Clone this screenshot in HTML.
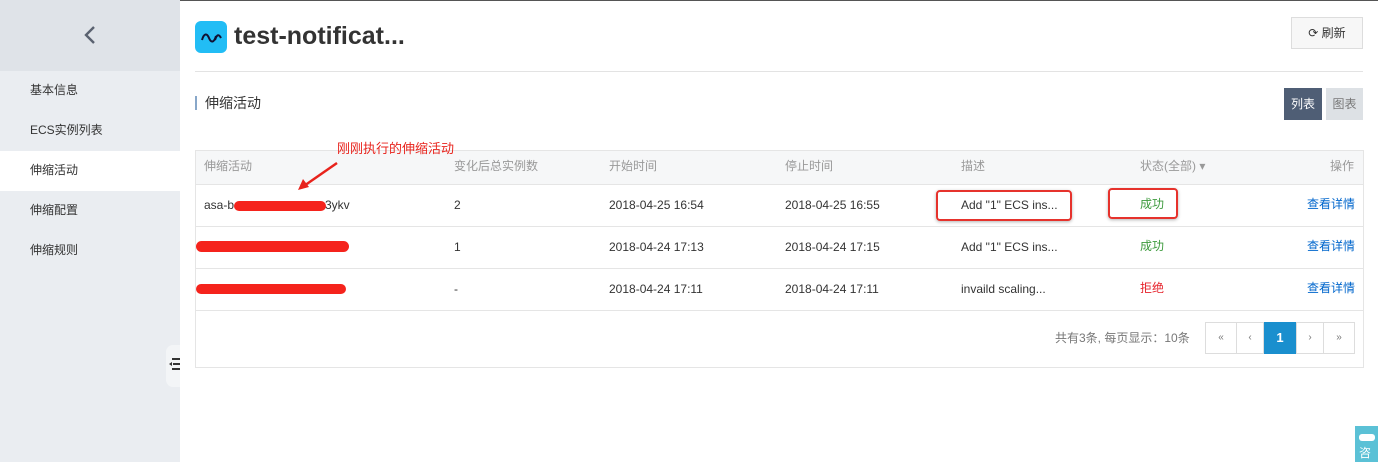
<!DOCTYPE html>
<html><head><meta charset="utf-8"><style>
*{margin:0;padding:0;box-sizing:border-box}
body{width:1378px;height:462px;overflow:hidden;background:#fff;font-family:"Liberation Sans","Noto Sans CJK SC",sans-serif;font-size:12px;color:#333;position:relative;line-height:14px}
.abs{position:absolute}
.side{left:0;top:0;width:180px;height:462px;background:#eaedf1}
.sidetop{left:0;top:0;width:180px;height:71px;background:#dfe3e8}
.nav{left:30px;font-size:12px;color:#333}
.th{top:159px;color:#999;font-size:12px}
.td{font-size:12px;color:#333}
.hl{border-top:1px solid #e5e5e5;left:196px;width:1167px}
.red{position:absolute;background:#f5231c;border-radius:6px}
.box{position:absolute;border:2px solid #e6322c;border-radius:4px;box-shadow:0 1px 3px rgba(0,0,0,.3)}
.pg{top:322px;height:32px;border:1px solid #ddd;background:#fff;color:#777;font-size:10px;text-align:center;line-height:30px}
</style></head><body>
<div class="abs" style="left:0;top:0;width:1378px;height:1px;background:#555"></div>
<div class="abs side"></div>
<div class="abs sidetop"></div>
<svg class="abs" style="left:83px;top:25px" width="14" height="20"><path d="M11 2 L3 10 L11 18" stroke="#5a6270" stroke-width="2.4" fill="none"/></svg>
<div class="abs nav" style="top:83px">基本信息</div>
<div class="abs nav" style="top:123px">ECS实例列表</div>
<div class="abs" style="left:0;top:151px;width:180px;height:40px;background:#fff"></div>
<div class="abs nav" style="top:163px">伸缩活动</div>
<div class="abs nav" style="top:203px">伸缩配置</div>
<div class="abs nav" style="top:243px">伸缩规则</div>
<div class="abs" style="left:166px;top:345px;width:14px;height:42px;background:#f3f5f7;border-radius:7px 0 0 7px"></div>
<svg class="abs" style="left:169px;top:357px" width="11" height="15"><rect x="3" y="1" width="8" height="2" fill="#333"/><rect x="4" y="6" width="7" height="2" fill="#333"/><path d="M0 7 L3 5 L3 9Z" fill="#333"/><rect x="3" y="11" width="8" height="2" fill="#333"/></svg>

<div class="abs" style="left:195px;top:21px;width:32px;height:32px;background:#22bdf5;border-radius:6px"></div>
<svg class="abs" style="left:195px;top:21px" width="32" height="32"><path d="M7 19 C9 12,12 12,14 17 C16 22,19 22,21 15" stroke="#113" stroke-width="2" fill="none"/><path d="M20 19 C22 13,24 13,26 17" stroke="#113" stroke-width="2" fill="none"/></svg>
<div class="abs" style="left:234px;top:22px;font-size:25px;line-height:28px;font-weight:bold;color:#333">test-notificat...</div>
<div class="abs" style="left:1291px;top:17px;width:72px;height:32px;border:1px solid #ddd;background:#f7f7f7;font-size:12px;line-height:30px;text-align:center;color:#333">⟳ 刷新</div>
<div class="abs" style="left:195px;top:71px;width:1168px;height:1px;background:#e3e3e3"></div>
<div class="abs" style="left:195px;top:96px;width:2px;height:14px;background:#88a7c9"></div>
<div class="abs" style="left:205px;top:95px;font-size:14px;line-height:16px;color:#333">伸缩活动</div>
<div class="abs" style="left:1284px;top:88px;width:38px;height:32px;background:#4f5e75;color:#fff;line-height:32px;text-align:center">列表</div>
<div class="abs" style="left:1326px;top:88px;width:37px;height:32px;background:#dde1e5;color:#777;line-height:32px;text-align:center">图表</div>

<div class="abs" style="left:195px;top:150px;width:1169px;height:218px;border:1px solid #e5e5e5"></div>
<div class="abs" style="left:196px;top:151px;width:1167px;height:33px;background:#f6f7f8"></div>
<div class="abs hl" style="top:184px"></div>
<div class="abs hl" style="top:226px"></div>
<div class="abs hl" style="top:268px"></div>
<div class="abs hl" style="top:310px"></div>
<div class="abs th" style="left:204px">伸缩活动</div>
<div class="abs th" style="left:454px">变化后总实例数</div>
<div class="abs th" style="left:609px">开始时间</div>
<div class="abs th" style="left:785px">停止时间</div>
<div class="abs th" style="left:961px">描述</div>
<div class="abs th" style="left:1140px">状态(全部) ▾</div>
<div class="abs th" style="left:1330px">操作</div>
<div class="abs" style="left:337px;top:141px;color:#e8231c;font-size:13px;line-height:15px">刚刚执行的伸缩活动</div>
<svg class="abs" style="left:295px;top:160px" width="45" height="35"><path d="M42 3 L6 28" stroke="#e8231c" stroke-width="2.5"/><path d="M3 30 L8 19 L14 27Z" fill="#e8231c"/></svg>

<div class="abs td" style="left:204px;top:198px">asa-b</div>
<div class="abs td" style="left:325px;top:198px">3ykv</div>
<div class="red" style="left:234px;top:201px;width:92px;height:10px"></div>
<div class="red" style="left:196px;top:241px;width:153px;height:11px"></div>
<div class="red" style="left:196px;top:284px;width:150px;height:10px"></div>
<div class="abs td" style="left:454px;top:198px">2</div>
<div class="abs td" style="left:454px;top:240px">1</div>
<div class="abs td" style="left:454px;top:282px">-</div>
<div class="abs td" style="left:609px;top:198px">2018-04-25 16:54</div>
<div class="abs td" style="left:609px;top:240px">2018-04-24 17:13</div>
<div class="abs td" style="left:609px;top:282px">2018-04-24 17:11</div>
<div class="abs td" style="left:785px;top:198px">2018-04-25 16:55</div>
<div class="abs td" style="left:785px;top:240px">2018-04-24 17:15</div>
<div class="abs td" style="left:785px;top:282px">2018-04-24 17:11</div>
<div class="abs td" style="left:961px;top:198px">Add "1" ECS ins...</div>
<div class="abs td" style="left:961px;top:240px">Add "1" ECS ins...</div>
<div class="abs td" style="left:961px;top:282px">invaild scaling...</div>
<div class="abs td" style="left:1140px;top:197px;color:#3c9a3c">成功</div>
<div class="abs td" style="left:1140px;top:239px;color:#3c9a3c">成功</div>
<div class="abs td" style="left:1140px;top:281px;color:#e6232c">拒绝</div>
<div class="box" style="left:936px;top:190px;width:136px;height:31px"></div>
<div class="box" style="left:1108px;top:188px;width:70px;height:31px"></div>
<div class="abs td" style="left:1307px;top:197px;color:#0066cc">查看详情</div>
<div class="abs td" style="left:1307px;top:239px;color:#0066cc">查看详情</div>
<div class="abs td" style="left:1307px;top:281px;color:#0066cc">查看详情</div>

<div class="abs" style="left:1055px;top:331px;color:#777">共有3条, 每页显示：10条</div>
<div class="abs pg" style="left:1205px;width:32px">«</div>
<div class="abs pg" style="left:1236px;width:28px">‹</div>
<div class="abs pg" style="left:1264px;width:32px;background:#1a8fce;border-color:#1a8fce;color:#fff;font-size:13px;font-weight:bold">1</div>
<div class="abs pg" style="left:1296px;width:28px">›</div>
<div class="abs pg" style="left:1323px;width:32px">»</div>

<div class="abs" style="left:1355px;top:426px;width:23px;height:36px;background:#5bc1d6"></div>
<div class="abs" style="left:1359px;top:434px;width:16px;height:7px;background:#fff;border-radius:3px"></div>
<div class="abs" style="left:1359px;top:446px;color:#fff;font-size:12px">咨</div>
</body></html>
